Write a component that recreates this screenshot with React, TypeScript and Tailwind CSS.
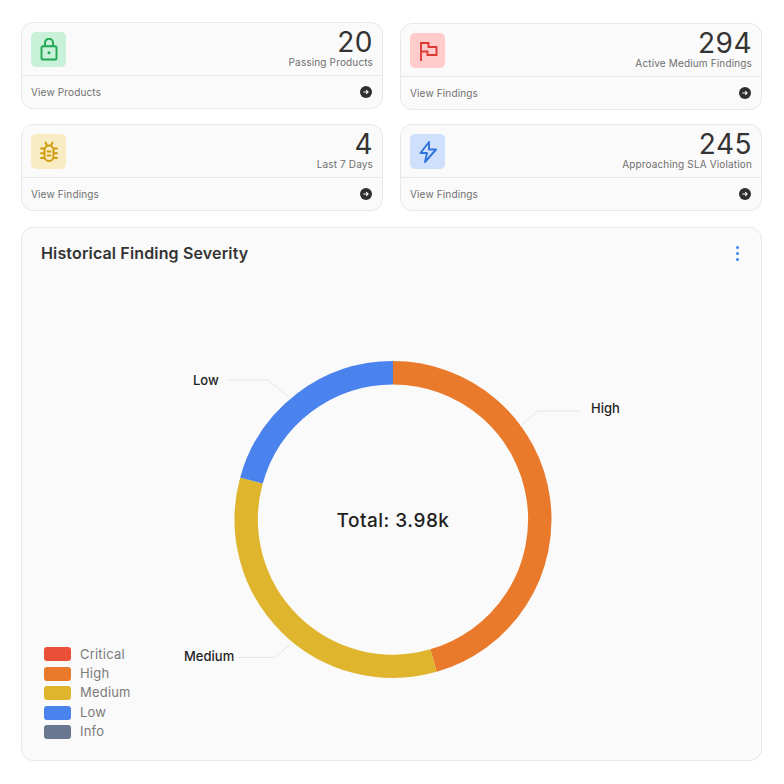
const font = { fontFamily: '"Inter", "Liberation Sans", sans-serif' };

function LockIcon() {
  return (
    <svg width="24" height="24" viewBox="0 0 24 24" fill="none" stroke="#22a755" strokeWidth="1.900" strokeLinejoin="round">
      <rect x="4.500" y="8.200" width="15" height="13.300" rx="1.600" />
      <path d="M8 8.200V4.800a4 4 0 0 1 8 0v3.400" />
      <circle cx="12" cy="14.800" r="1.500" fill="#22a755" stroke="none" />
    </svg>
  );
}

function FlagIcon() {
  return (
    <svg width="24" height="24" viewBox="0 0 24 24" fill="none" stroke="#dc3b35" strokeWidth="1.900">
      <path d="M5 22V4h7.500v4h8v8h-9v-3.500H5" />
    </svg>
  );
}

function BugIcon() {
  return (
    <svg width="24" height="24" viewBox="0 0 24 24" fill="none" stroke="#cf9b0f" strokeWidth="1.900" strokeLinecap="round">
      <rect x="7.500" y="5.500" width="9" height="15.500" rx="4.500" />
      <path d="M10.500 11.500h3M10.500 15.500h3" />
      <path d="M4 8.500h3.500M4 13.300h3.500M4 18h3.500M20 8.500h-3.500M20 13.300h-3.500M20 18h-3.500" />
      <path d="M8.500 2.500l1.500 3M15.500 2.500l-1.500 3" />
    </svg>
  );
}

function BoltIcon() {
  return (
    <svg width="24" height="24" viewBox="0 0 24 24" fill="none" stroke="#3272dc" strokeWidth="1.900" strokeLinejoin="round">
      <path d="M13 2L4.500 13H11L9 22L20 9.500H13Z" />
    </svg>
  );
}

function ArrowDot() {
  return (
    <svg width="12" height="12" viewBox="0 0 12 12" className="-mt-px">
      <circle cx="6" cy="6" r="6" fill="#2f2f2f" />
      <path d="M3.400 6h4.600M6.200 4.100L8.100 6 6.200 7.900" fill="none" stroke="#fafafa" strokeWidth="1.100" />
    </svg>
  );
}

interface StatCardProps {
  icon: React.ReactNode;
  iconBg: string;
  value: string;
  label: string;
  link: string;
}

function StatCard({ icon, iconBg, value, label, link }: StatCardProps) {
  return (
    <div className="h-[87px] rounded-xl border border-[#e8e8e8] bg-[#fafafa]">
      <div className="flex h-[53px] items-start justify-between border-b border-[#e8e8e8] px-[9px] pt-[9px]">
        <div className={`flex h-[35px] w-[35px] items-center justify-center rounded-[5px] ${iconBg}`}>{icon}</div>
        <div className="flex flex-col items-end">
          <div className="-mt-[2px] text-[28px] font-normal leading-[24px] tracking-[0.5px] text-[#333333]">{value}</div>
          <div className="mt-[2px] text-[10px] leading-[13px] tracking-[0.15px] text-[#6f6f6f]">{label}</div>
        </div>
      </div>
      <div className="flex h-[32px] items-center justify-between pl-[9px] pr-[10px] pt-px">
        <span className="text-[10px] tracking-[0.15px] text-[#6f6f6f]">{link}</span>
        <ArrowDot />
      </div>
    </div>
  );
}

const legend = [
  { name: 'Critical', color: 'bg-[#ea5038]' },
  { name: 'High', color: 'bg-[#e97a2b]' },
  { name: 'Medium', color: 'bg-[#e0b52e]' },
  { name: 'Low', color: 'bg-[#4a82ee]' },
  { name: 'Info', color: 'bg-[#68768f]' },
];

// donut arc between two angles, clockwise from 12 o'clock
function arc(from: number, to: number) {
  const cx = 393;
  const cy = 519.5;
  const r = 146.8;
  const point = (deg: number) => {
    const rad = ((deg - 90) * Math.PI) / 180;
    return `${cx + r * Math.cos(rad)} ${cy + r * Math.sin(rad)}`;
  };
  const large = to - from > 180 ? 1 : 0;
  return `M${point(from)} A${r} ${r} 0 ${large} 1 ${point(to)}`;
}

function Donut() {
  return (
    <svg width="739" height="482" viewBox="22 278 739 482" className="block">
      <g fill="none" strokeWidth="23.400">
        <path d={arc(0, 164)} stroke="#e97a2b" />
        <path d={arc(164, 285.4)} stroke="#e0b52e" />
        <path d={arc(285.4, 360)} stroke="#4a82ee" />
      </g>
      <g fill="none" stroke="#e6e6e6" strokeWidth="1">
        <path d="M228 380H268L290 398" />
        <path d="M520 426L538 411H580" />
        <path d="M238 657.500H275L292 643" />
      </g>
      <g fontSize="13" fontWeight="500" fill="#1f1f1f">
        <text x="193" y="385">Low</text>
        <text x="591" y="413">High</text>
        <text x="184" y="661">Medium</text>
      </g>
      <text x="393" y="527" textAnchor="middle" fontSize="19" fontWeight="500" letterSpacing="0.5" fill="#1f1f1f">Total: 3.98k</text>
    </svg>
  );
}

export default function App() {
  return (
    <div className="h-[784px] w-[784px] overflow-hidden bg-white pl-[21px] pr-[22px] pt-[22px]" style={font}>
      <div className="grid grid-cols-2 gap-x-[17px]">
        <div className="flex flex-col gap-[15px]">
          <StatCard icon={<LockIcon />} iconBg="bg-[#c9f0d8]" value="20" label="Passing Products" link="View Products" />
          <StatCard icon={<BugIcon />} iconBg="bg-[#faecc2]" value="4" label="Last 7 Days" link="View Findings" />
        </div>
        <div className="mt-px flex flex-col gap-[14px]">
          <StatCard icon={<FlagIcon />} iconBg="bg-[#ffcccb]" value="294" label="Active Medium Findings" link="View Findings" />
          <StatCard icon={<BoltIcon />} iconBg="bg-[#cfe0fc]" value="245" label="Approaching SLA Violation" link="View Findings" />
        </div>
      </div>

      <div className="relative mt-4 h-[534px] rounded-xl border border-[#e8e8e8] bg-[#fafafa]">
        <div className="flex h-[50px] items-start justify-between pl-[19px] pr-[22px] pt-[15px]">
          <h2 className="text-[16px] font-semibold leading-5 tracking-[0.15px] text-[#333333]">Historical Finding Severity</h2>
          <div className="mt-[3px] flex flex-col gap-[3px]">
            <span className="h-[3px] w-[3px] rounded-full bg-[#3b82f6]" />
            <span className="h-[3px] w-[3px] rounded-full bg-[#3b82f6]" />
            <span className="h-[3px] w-[3px] rounded-full bg-[#3b82f6]" />
          </div>
        </div>
        <Donut />
        <div className="absolute bottom-[21px] left-[22px] flex flex-col gap-[5.400px]">
          {legend.map((item) => (
            <div key={item.name} className="flex h-[14px] items-center gap-[9px]">
              <span className={`h-[14px] w-[27px] rounded-[3px] ${item.color}`} />
              <span className="text-[13px] tracking-[0.2px] text-[#7a7a7a]">{item.name}</span>
            </div>
          ))}
        </div>
      </div>
    </div>
  );
}
